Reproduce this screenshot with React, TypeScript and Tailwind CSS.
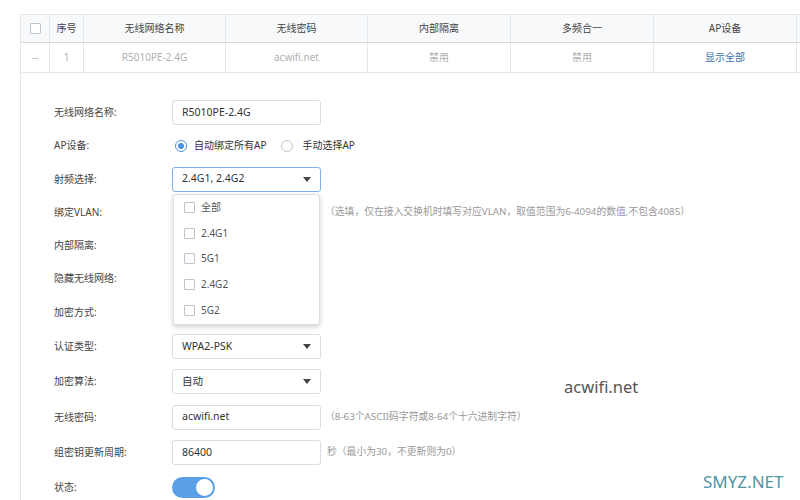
import React from 'react';

const font = { fontFamily: '"Noto Sans", "Noto Sans CJK SC", sans-serif' };

const cols = ['w-[29px]', 'w-[34px]', 'w-[142px]', 'w-[142px]', 'w-[143px]', 'w-[143px]', 'w-[143px]', 'w-[120px]'];

const Caret = () => (
  <svg width="8" height="5" viewBox="0 0 8 5" className="ml-auto">
    <path d="M0 0h8L4 5z" fill="#444" />
  </svg>
);

const Box = () => <span className="inline-block w-[11px] h-[11px] border border-[#bfc4cc] rounded-[1px] bg-white" />;

const Row: React.FC<{ label: string; h: string; children?: React.ReactNode }> = ({ label, h, children }) => (
  <div className={`flex items-center ${h}`}>
    <div className="w-[118px] text-[10px] text-[#444]">{label}</div>
    {children}
  </div>
);

const Input: React.FC<{ value: string }> = ({ value }) => (
  <div className="w-[149px] h-[25px] border border-[#d9dde3] rounded-[3px] px-[9px] flex items-center text-[10.5px] text-[#333]">{value}</div>
);

const Select: React.FC<{ value: string; active?: boolean }> = ({ value, active }) => (
  <div
    className={`w-[149px] h-[25px] border rounded-[3px] px-[9px] flex items-center text-[10.5px] text-[#333] ${active ? 'border-[#7fb1e6]' : 'border-[#d9dde3]'}`}
  >
    <span>{value}</span>
    <Caret />
  </div>
);

const Hint: React.FC<{ children: React.ReactNode }> = ({ children }) => (
  <span className="ml-[4px] text-[9.8px] text-[#999] whitespace-nowrap">{children}</span>
);

export default function App() {
  const header = ['', '序号', '无线网络名称', '无线密码', '内部隔离', '多频合一', 'AP设备', ''];
  const body = ['--', '1', 'R5010PE-2.4G', 'acwifi.net', '禁用', '禁用', '显示全部', ''];

  return (
    <div className="w-[800px] h-[500px] overflow-hidden relative bg-white" style={font}>
      <div className="pt-[14px] pl-[20px]">
        {/* table */}
        <div className="flex border-t border-[#e3e6ea] bg-[#f8f9fb] h-[29px] border-b border-b-[#d5d9df]">
          {header.map((h, i) => (
            <div
              key={i}
              className={`${cols[i]} shrink-0 flex items-center justify-center border-l border-[#e3e6ea] text-[10px] text-[#444]`}
            >
              {i === 0 ? <Box /> : h}
            </div>
          ))}
        </div>
        <div className="flex h-[30px] border-b border-[#e3e6ea]">
          {body.map((b, i) => (
            <div
              key={i}
              className={`${cols[i]} shrink-0 flex items-center justify-center border-l border-[#e3e6ea] text-[10px] ${i === 6 ? 'text-[#3d6fa6]' : 'text-[#b0b0b0]'}`}
            >
              {b}
            </div>
          ))}
        </div>

        {/* expanded panel */}
        <div className="border-l border-[#e3e6ea] pl-[33px] pt-[23px] h-[440px]">
          <Row label="无线网络名称:" h="h-[33px]">
            <Input value="R5010PE-2.4G" />
          </Row>
          <Row label="AP设备:" h="h-[33px]">
            <div className="flex items-center text-[10px] text-[#333]">
              <span className="ml-[3px] w-[12px] h-[12px] rounded-full border border-[#4a93e2] flex items-center justify-center">
                <span className="w-[6px] h-[6px] rounded-full bg-[#4a93e2]" />
              </span>
              <span className="ml-[7px]">自动绑定所有AP</span>
              <span className="ml-[15px] w-[12px] h-[12px] rounded-full border border-[#c4c8ce]" />
              <span className="ml-[9px]">手动选择AP</span>
            </div>
          </Row>
          <Row label="射频选择:" h="h-[34px]">
            <div className="relative">
              <Select value="2.4G1, 2.4G2" active />
              <div className="absolute z-10 left-[1px] top-[27px] w-[147px] h-[131px] bg-white border border-[#dde0e5] rounded-[3px] shadow-[0_2px_5px_rgba(0,0,0,0.18)]">
                {['全部', '2.4G1', '5G1', '2.4G2', '5G2'].map((o) => (
                  <div key={o} className="flex items-center h-[25.8px] pl-[10px] text-[10px] text-[#555]">
                    <Box />
                    <span className="ml-[6px]">{o}</span>
                  </div>
                ))}
              </div>
            </div>
          </Row>
          <Row label="绑定VLAN:" h="h-[33px]">
            <div className="w-[149px] h-[25px]" />
            <Hint>（选填，仅在接入交换机时填写对应VLAN，取值范围为6-4094的数值,不包含4085）</Hint>
          </Row>
          <Row label="内部隔离:" h="h-[33px]" />
          <Row label="隐藏无线网络:" h="h-[33px]" />
          <Row label="加密方式:" h="h-[34px]" />
          <Row label="认证类型:" h="h-[35px]">
            <Select value="WPA2-PSK" />
          </Row>
          <Row label="加密算法:" h="h-[35px]">
            <Select value="自动" />
          </Row>
          <Row label="无线密码:" h="h-[36px]">
            <Input value="acwifi.net" />
            <Hint>（8-63个ASCII码字符或8-64个十六进制字符）</Hint>
          </Row>
          <Row label="组密钥更新周期:" h="h-[35px]">
            <Input value="86400" />
            <span className="ml-[6px] text-[9.8px] text-[#999]">秒（最小为30，不更新则为0）</span>
          </Row>
          <Row label="状态:" h="h-[34px]">
            <div className="w-[43px] h-[21px] rounded-full bg-[#5b9fe8] flex items-center justify-end pr-[2px]">
              <span className="w-[17px] h-[17px] rounded-full bg-white" />
            </div>
          </Row>
        </div>
      </div>

      {/* watermarks */}
      <div className="absolute left-[564px] top-[375px] text-[16.5px] text-[#555]">acwifi.net</div>
      <div className="absolute left-[703px] top-[469px] text-[17px] text-[#4f95a6]">SMYZ.NET</div>
    </div>
  );
}
